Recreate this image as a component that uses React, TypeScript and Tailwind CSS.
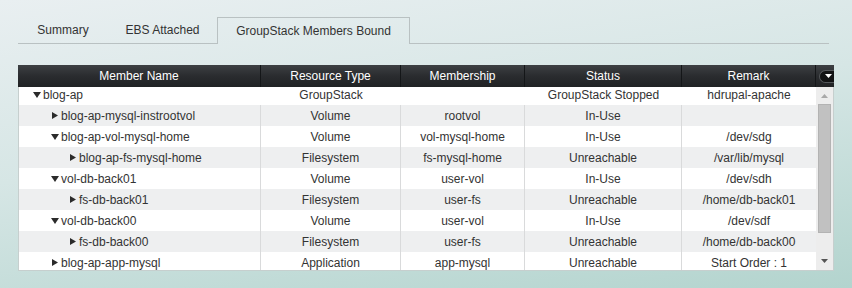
import React from "react";

type Row = {
  level: number;
  open: boolean;
  name: string;
  type: string;
  membership: string;
  status: string;
  remark: string;
};

const rows: Row[] = [
  { level: 0, open: true, name: "blog-ap", type: "GroupStack", membership: "", status: "GroupStack Stopped", remark: "hdrupal-apache" },
  { level: 1, open: false, name: "blog-ap-mysql-instrootvol", type: "Volume", membership: "rootvol", status: "In-Use", remark: "" },
  { level: 1, open: true, name: "blog-ap-vol-mysql-home", type: "Volume", membership: "vol-mysql-home", status: "In-Use", remark: "/dev/sdg" },
  { level: 2, open: false, name: "blog-ap-fs-mysql-home", type: "Filesystem", membership: "fs-mysql-home", status: "Unreachable", remark: "/var/lib/mysql" },
  { level: 1, open: true, name: "vol-db-back01", type: "Volume", membership: "user-vol", status: "In-Use", remark: "/dev/sdh" },
  { level: 2, open: false, name: "fs-db-back01", type: "Filesystem", membership: "user-fs", status: "Unreachable", remark: "/home/db-back01" },
  { level: 1, open: true, name: "vol-db-back00", type: "Volume", membership: "user-vol", status: "In-Use", remark: "/dev/sdf" },
  { level: 2, open: false, name: "fs-db-back00", type: "Filesystem", membership: "user-fs", status: "Unreachable", remark: "/home/db-back00" },
  { level: 1, open: false, name: "blog-ap-app-mysql", type: "Application", membership: "app-mysql", status: "Unreachable", remark: "Start Order : 1" },
];

function Toggle({ open }: { open: boolean }) {
  return (
    <span className="inline-flex w-[10px] h-[21px] items-center justify-center shrink-0">
      {open ? (
        <svg width="8" height="6" viewBox="0 0 8 6">
          <polygon points="0,0 8,0 4,6" fill="#2b2b2b" />
        </svg>
      ) : (
        <svg width="6" height="7" viewBox="0 0 6 7">
          <polygon points="0,0 6,3.5 0,7" fill="#2b2b2b" />
        </svg>
      )}
    </span>
  );
}

const headerCols = [
  { label: "Member Name", w: "w-[243px]" },
  { label: "Resource Type", w: "w-[140px]" },
  { label: "Membership", w: "w-[124px]" },
  { label: "Status", w: "w-[157px]" },
  { label: "Remark", w: "w-[134px]" },
];

export default function App() {
  return (
    <div
      className="w-[852px] h-[288px] pl-[18px] pt-[17px] bg-[linear-gradient(172deg,#e9eff1_0%,#d6e6e5_45%,#b3d4ce_100%)] text-[#333] text-[12px]"
      style={{ fontFamily: '"Liberation Sans", Arial, sans-serif' }}
    >
      {/* Tabs */}
      <div className="flex w-[811px] h-[27px]">
        <div className="w-[90px] h-full flex items-center justify-center border-b border-[#b9c1c2]">Summary</div>
        <div className="w-[109px] h-full flex items-center justify-center border-b border-[#b9c1c2]">EBS Attached</div>
        <div className="w-[193px] h-full flex items-center justify-center border-t border-x border-[#b9c1c2] pb-[1px]">
          GroupStack Members Bound
        </div>
        <div className="flex-1 h-full border-b border-[#b9c1c2]" />
      </div>

      {/* Table */}
      <div className="mt-[21px] w-[816px]">
        {/* Header */}
        <div className="flex h-[22px] bg-[linear-gradient(to_bottom,#3d4043,#2a2c2f_50%,#202224)] text-white">
          {headerCols.map((c) => (
            <div
              key={c.label}
              className={`${c.w} h-full flex items-center justify-center border-r border-[#141618]`}
            >
              {c.label}
            </div>
          ))}
          <div className="w-[18px] h-full flex items-center justify-end">
            <div className="w-[15px] h-[13px] rounded-l-full bg-[#121314] border border-r-0 border-[#55585b] flex items-center justify-center pl-[2px]">
              <svg width="7" height="4" viewBox="0 0 7 4">
                <polygon points="0,0 7,0 3.5,4" fill="#ffffff" />
              </svg>
            </div>
          </div>
        </div>

        {/* Body */}
        <div className="flex h-[184px] border-l border-r border-b border-[#c6cfce]">
          <div className="w-[797px] h-full overflow-hidden">
            <div className="-mt-[3px]">
              {rows.map((r, i) => {
                const grey = i % 2 === 1;
                const div = i === 0 ? "" : "border-r border-[#d9dadb]";
                return (
                  <div key={i} className={`flex h-[21px] ${grey ? "bg-[#eeeff0]" : "bg-white"}`}>
                    <div className={`w-[242px] h-full flex items-center ${div}`}>
                      <div className="flex items-center" style={{ paddingLeft: 13 + r.level * 18 }}>
                        <Toggle open={r.open} />
                        <span className="ml-[1px] whitespace-nowrap">{r.name}</span>
                      </div>
                    </div>
                    <div className={`w-[140px] h-full flex items-center justify-center ${div}`}>{r.type}</div>
                    <div className={`w-[124px] h-full flex items-center justify-center ${div}`}>{r.membership}</div>
                    <div className={`w-[157px] h-full flex items-center justify-center ${div}`}>{r.status}</div>
                    <div className="w-[134px] h-full flex items-center justify-center">{r.remark}</div>
                  </div>
                );
              })}
            </div>
          </div>
          {/* Scrollbar */}
          <div className="w-[17px] h-full bg-[#ededed] flex flex-col items-center">
            <div className="h-[17px] flex items-center justify-center">
              <svg width="7" height="4" viewBox="0 0 7 4">
                <polygon points="0,4 7,4 3.5,0" fill="#a9a9a9" />
              </svg>
            </div>
            <div className="w-[13px] h-[129px] bg-[#c1c1c1] border border-[#b3b3b3]" />
            <div className="flex-1" />
            <div className="h-[18px] flex items-center justify-center">
              <svg width="7" height="4" viewBox="0 0 7 4">
                <polygon points="0,0 7,0 3.5,4" fill="#555555" />
              </svg>
            </div>
          </div>
        </div>
      </div>
    </div>
  );
}
